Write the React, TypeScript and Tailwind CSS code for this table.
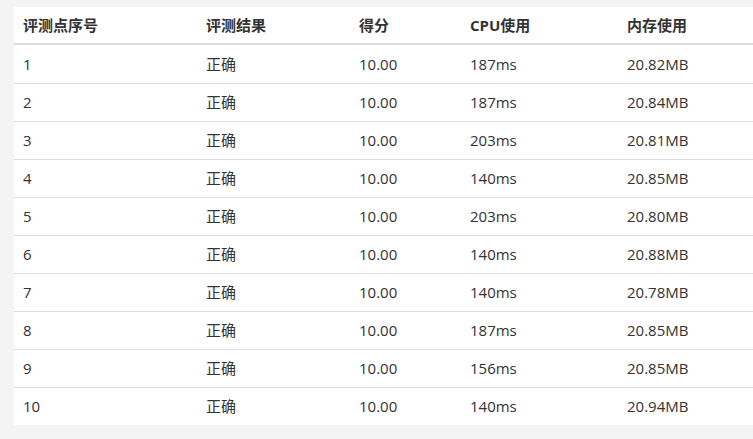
const rows = [
  ["1", "正确", "10.00", "187ms", "20.82MB"],
  ["2", "正确", "10.00", "187ms", "20.84MB"],
  ["3", "正确", "10.00", "203ms", "20.81MB"],
  ["4", "正确", "10.00", "140ms", "20.85MB"],
  ["5", "正确", "10.00", "203ms", "20.80MB"],
  ["6", "正确", "10.00", "140ms", "20.88MB"],
  ["7", "正确", "10.00", "140ms", "20.78MB"],
  ["8", "正确", "10.00", "187ms", "20.85MB"],
  ["9", "正确", "10.00", "156ms", "20.85MB"],
  ["10", "正确", "10.00", "140ms", "20.94MB"],
]

const headers = ["评测点序号", "评测结果", "得分", "CPU使用", "内存使用"]
const cols = "grid grid-cols-[183px_153px_111px_157px_160px]"

export default function App() {
  return (
    <div
      className="min-h-screen bg-[#f4f4f4] pt-[7px] pl-[14px] overflow-hidden"
      style={{ fontFamily: '"Open Sans", "Noto Sans CJK SC", sans-serif' }}
    >
      <div className="w-[765px] bg-white text-[15px] text-[#333]">
        <div className={`${cols} h-[38px] items-center border-b-2 border-[#ddd] font-bold`}>
          {headers.map((h) => (
            <div key={h} className="pl-[9px]">{h}</div>
          ))}
        </div>
        {rows.map((r, i) => (
          <div
            key={r[0]}
            className={`${cols} h-[38px] items-center ${i > 0 ? "border-t border-[#ddd]" : ""}`}
          >
            {r.map((c, j) => (
              <div key={j} className="pl-[9px]">{c}</div>
            ))}
          </div>
        ))}
      </div>
    </div>
  )
}
